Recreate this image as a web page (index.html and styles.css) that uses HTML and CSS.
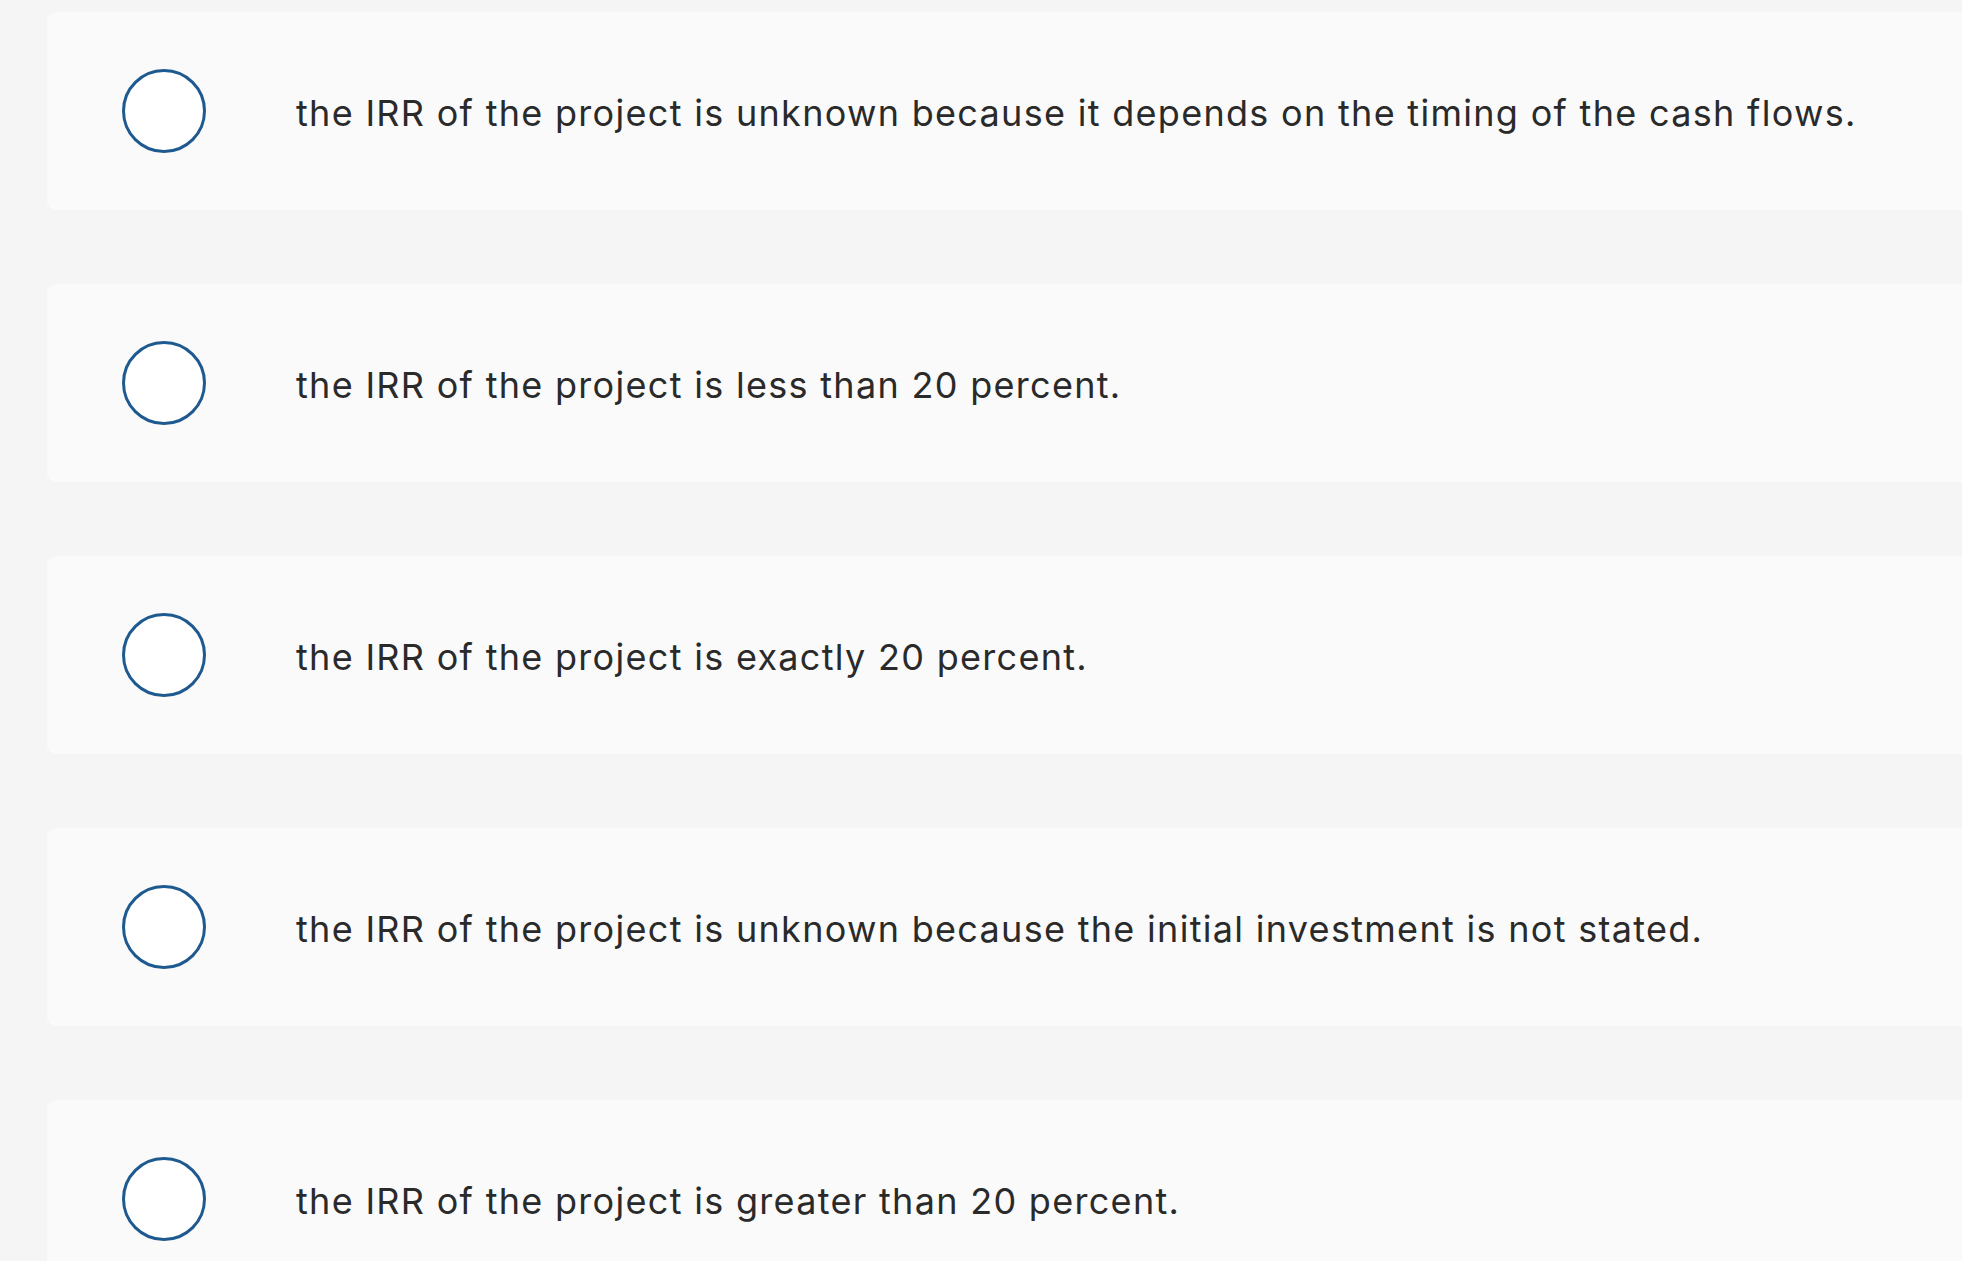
FILE: index.html
```html
<!DOCTYPE html>
<html lang="en">
<head>
<meta charset="utf-8">
<title>Answer choices</title>
<link rel="stylesheet" href="styles.css">
</head>
<body>
<div class="page">
  <ul class="choices">
    <li class="choice">
      <span class="radio"></span>
      <span class="label">the IRR of the project is unknown because it depends on the timing of the cash flows.</span>
    </li>
    <li class="choice">
      <span class="radio"></span>
      <span class="label">the IRR of the project is less than 20 percent.</span>
    </li>
    <li class="choice">
      <span class="radio"></span>
      <span class="label">the IRR of the project is exactly 20 percent.</span>
    </li>
    <li class="choice">
      <span class="radio"></span>
      <span class="label">the IRR of the project is unknown because the initial investment is not stated.</span>
    </li>
    <li class="choice">
      <span class="radio"></span>
      <span class="label">the IRR of the project is greater than 20 percent.</span>
    </li>
  </ul>
</div>
</body>
</html>
```
FILE: styles.css
```css
html, body {
  margin: 0;
  padding: 0;
  background: #ffffff;
}

.page {
  height: 1261px;
  overflow: hidden;
  background: #f5f5f5;
  font-family: "Inter", "Noto Sans", sans-serif;
}

.choices {
  list-style: none;
  margin: 0;
  padding: 12px 0 0 47px;
  display: flex;
  flex-direction: column;
  gap: 74px;
}

.choice {
  box-sizing: border-box;
  height: 198px;
  margin-right: -20px;
  padding-left: 75px;
  background: #fafafa;
  border-radius: 9px;
  display: flex;
  align-items: center;
  gap: 90px;
  flex-shrink: 0;
}

.radio {
  box-sizing: border-box;
  flex: 0 0 auto;
  width: 84px;
  height: 84px;
  border: 3px solid #1e5a8f;
  border-radius: 50%;
  background: #ffffff;
}

.label {
  margin-top: 4px;
  font-size: 36px;
  letter-spacing: 1.3px;
  color: #2a2a2a;
  white-space: nowrap;
}
```
